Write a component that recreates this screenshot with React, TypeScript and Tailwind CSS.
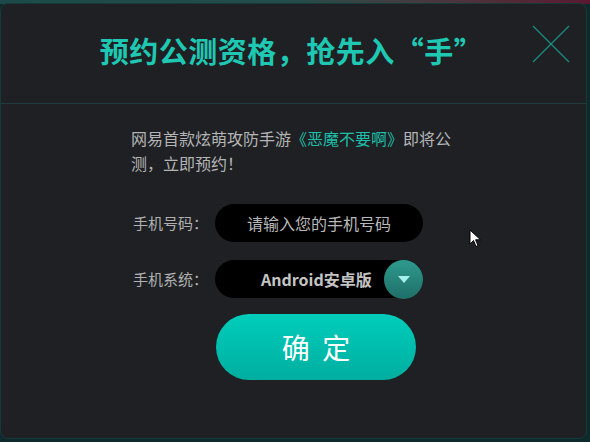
import { useState } from 'react'

const font = { fontFamily: '"Microsoft YaHei", "Noto Sans CJK SC", "Noto Sans", sans-serif' }

function CloseIcon() {
  return (
    <svg width="40" height="40" viewBox="0 0 40 40" className="block">
      <line x1="2" y1="2" x2="38" y2="38" stroke="#1c8c80" strokeWidth="1.3" />
      <line x1="38" y1="2" x2="2" y2="38" stroke="#1c8c80" strokeWidth="1.3" />
    </svg>
  )
}

function Cursor() {
  return (
    <svg width="14" height="20" viewBox="0 0 14 20" className="absolute left-[469px] top-[229px]">
      <path d="M1 1 L1 15 L4.5 11.5 L7 17.5 L9 16.6 L6.6 10.8 L11.5 10.8 Z" fill="#fff" stroke="#000" strokeWidth="1" />
    </svg>
  )
}

export default function App() {
  const [phone, setPhone] = useState('')

  return (
    <div
      className="relative w-[590px] h-[442px] overflow-hidden bg-[#0f2a2c]"
      style={font}
    >
      <div className="absolute inset-x-0 top-0 h-[4px] bg-gradient-to-r from-[#1d4a48] via-[#244c4a] to-[#5a1830]" />
      <div className="relative mt-[3px] w-[587px] h-[436px] rounded-[8px] border border-[#16393a] bg-[#1e2024] flex flex-col">
        <div className="relative h-[100px] flex items-center justify-center border-b border-[#1c3c3e]">
          <h1 className="text-[29px] font-bold tracking-[0.5px] text-[#1ec8b2] mr-[4px] mt-[-6px]">
            预约公测资格，抢先入“手”
          </h1>
          <button className="absolute right-[15px] top-[20px]">
            <CloseIcon />
          </button>
        </div>

        <p className="ml-[130px] w-[326px] pt-[22px] text-[16px] leading-[25px] text-[#b5b5b5]">
          网易首款炫萌攻防手游<span className="text-[#1dbfa8]">《恶魔不要啊》</span>即将公测，立即预约！
        </p>

        <div className="pl-[132px] mt-[28px] flex items-center">
          <span className="w-[82px] text-[15px] text-[#b0b0b0]">手机号码：</span>
          <input
            value={phone}
            onChange={(e) => setPhone(e.target.value)}
            placeholder="请输入您的手机号码"
            className="w-[208px] h-[38px] rounded-full bg-black text-center text-[16px] text-[#ccc] placeholder:text-[#b8b8b8] outline-none"
          />
        </div>

        <div className="pl-[132px] mt-[18px] flex items-center">
          <span className="w-[82px] text-[15px] text-[#b0b0b0]">手机系统：</span>
          <div className="relative w-[208px] h-[38px] rounded-full bg-black flex items-center">
            <span className="ml-[46px] text-[16px] font-bold text-[#c4c4c4]">Android安卓版</span>
            <div className="absolute right-0 top-0 w-[39px] h-[39px] rounded-full bg-gradient-to-b from-[#2e9a8e] to-[#1f6f68] flex items-center justify-center">
              <svg width="12" height="7" viewBox="0 0 12 7">
                <path d="M0 0 H12 L6 7 Z" fill="#a8f0ec" />
              </svg>
            </div>
          </div>
        </div>

        <div className="pl-[215px] mt-[16px]">
          <button className="w-[200px] h-[66px] rounded-full bg-gradient-to-b from-[#00cdbb] to-[#00ae9f] text-white text-[28px] tracking-[3px] pl-[3px]">
            确 定
          </button>
        </div>
      </div>
      <Cursor />
    </div>
  )
}
